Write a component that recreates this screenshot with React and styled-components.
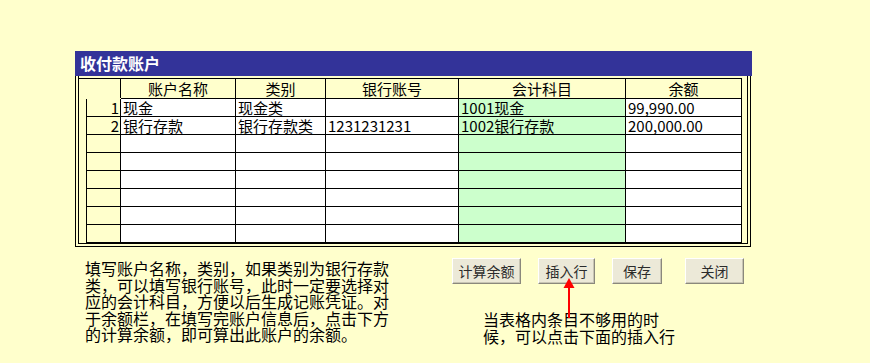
import React from 'react'
import styled, { createGlobalStyle } from 'styled-components';

const GlobalStyle = createGlobalStyle`
    html, body {
        margin: 0;
        background: #ffffcc;
    }
    body {
        font-family: "Noto Sans CJK SC", "Noto Sans", sans-serif;
        color: #000;
    }
`;

const Page = styled.div`
    padding: 51px 0 0 75px;
    width: 795px;
    height: 312px;
    overflow: hidden;
`;

const Panel = styled.div`
    width: 677px;
`;

const TitleBar = styled.div`
    height: 25px;
    line-height: 25px;
    background: #333399;
    color: #fff;
    font-weight: bold;
    font-size: 16px;
    padding-left: 5px;
`;

const Frame = styled.div`
    width: 676px;
    box-sizing: border-box;
    border: 4px double #000;
    border-top: none;
    padding: 2px 5px 0 0;
`;

const Grid = styled.div`
    display: grid;
    grid-template-columns: 42px 115px 90px 133px 167px 116px;
    border-top: 1px solid #000;
`;

const HeadCell = styled.div`
    height: 19px;
    line-height: 19px;
    font-size: 15px;
    text-align: center;
    border-right: 1px solid #000;
    border-bottom: ${p => (p.corner ? 'none' : '1px solid #000')};
`;

const RowNum = styled.div`
    margin-left: 7px;
    height: 17px;
    line-height: 17px;
    font-size: 15px;
    text-align: right;
    padding-right: 1px;
    border-left: 1px solid #000;
    border-right: 1px solid #000;
    border-bottom: 1px solid #000;
`;

const Cell = styled.div`
    height: 17px;
    line-height: 17px;
    font-size: 15px;
    padding-left: 2px;
    white-space: nowrap;
    background: ${p => (p.green ? '#ccffcc' : '#fff')};
    border-right: 1px solid #000;
    border-bottom: 1px solid #000;
`;

const Lower = styled.div`
    display: flex;
    padding-top: 11px;
`;

const Note = styled.div`
    width: 368px;
    margin: 2px 0 0 10px;
    font-size: 16px;
    line-height: 16.5px;
    white-space: nowrap;
`;

const Actions = styled.div`
    position: relative;
    margin-left: -1px;
`;

const ButtonRow = styled.div`
    display: flex;
    gap: 17px;
`;

const Button = styled.button`
    width: ${p => p.w}px;
    height: 26px;
    margin-left: ${p => p.extra || 0}px;
    padding: 0;
    box-sizing: border-box;
    background: #ece9d8;
    border: 1px solid;
    border-color: #fff #8a887c #8a887c #fff;
    box-shadow: inset -1px -1px 0 #c8c5b4;
    font-family: "Noto Sans CJK SC", sans-serif;
    font-size: 14px;
    color: #2b2b2b;
`;

const Arrow = styled.svg`
    position: absolute;
    left: 111px;
    top: 20px;
`;

const Hint = styled.div`
    margin: 27px 0 0 31px;
    font-size: 16px;
    line-height: 16.5px;
    white-space: nowrap;
`;

const columns = ['账户名称', '类别', '银行账号', '会计科目', '余额'];

const rows = [
    ['现金', '现金类', '', '1001现金', '99,990.00'],
    ['银行存款', '银行存款类', '1231231231', '1002银行存款', '200,000.00'],
    ['', '', '', '', ''],
    ['', '', '', '', ''],
    ['', '', '', '', ''],
    ['', '', '', '', ''],
    ['', '', '', '', ''],
    ['', '', '', '', ''],
];

function App() {
    return (
        <Page>
            <GlobalStyle />
            <Panel>
                <TitleBar>收付款账户</TitleBar>
                <Frame>
                    <Grid>
                        <HeadCell corner />
                        {columns.map(c => (
                            <HeadCell key={c}>{c}</HeadCell>
                        ))}
                        {rows.map((row, i) => (
                            <React.Fragment key={i}>
                                <RowNum>{row[0] ? i + 1 : ''}</RowNum>
                                {row.map((v, j) => (
                                    <Cell key={j} green={j === 3}>{v}</Cell>
                                ))}
                            </React.Fragment>
                        ))}
                    </Grid>
                </Frame>
            </Panel>
            <Lower>
                <Note>
                    填写账户名称，类别，如果类别为银行存款<br />
                    类，可以填写银行账号，此时一定要选择对<br />
                    应的会计科目，方便以后生成记账凭证。对<br />
                    于余额栏，在填写完账户信息后，点击下方<br />
                    的计算余额，即可算出此账户的余额。
                </Note>
                <Actions>
                    <ButtonRow>
                        <Button w={69}>计算余额</Button>
                        <Button w={57}>插入行</Button>
                        <Button w={50}>保存</Button>
                        <Button w={59} extra={6}>关闭</Button>
                    </ButtonRow>
                    <Arrow width="12" height="42" viewBox="0 0 12 42">
                        <polygon points="6,0 0.5,10 11.5,10" fill="#ff0000" />
                        <line x1="6" y1="9" x2="6" y2="40" stroke="#ff0000" strokeWidth="2" />
                    </Arrow>
                    <Hint>
                        当表格内条目不够用的时<br />
                        候，可以点击下面的插入行
                    </Hint>
                </Actions>
            </Lower>
        </Page>
    )
}

export default App
